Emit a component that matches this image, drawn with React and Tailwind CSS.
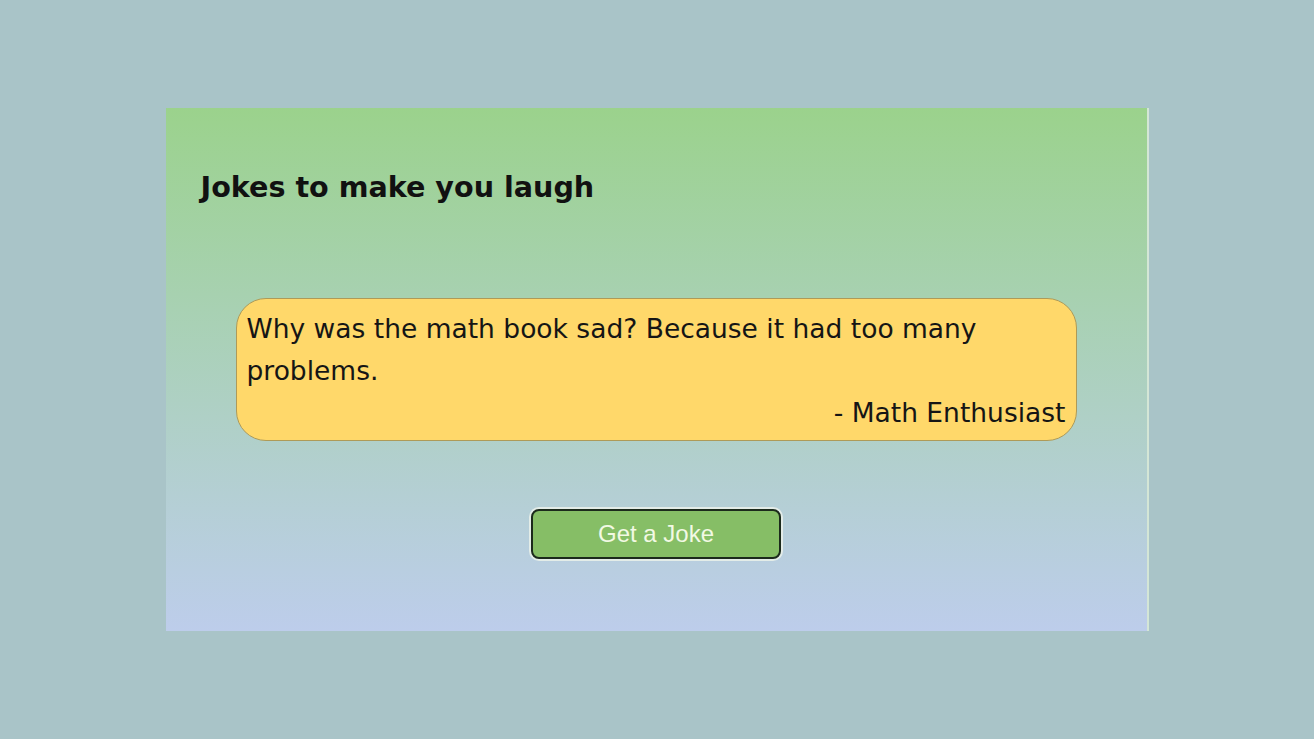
import React from "react";

const comic = { fontFamily: '"Comic Sans MS", "DejaVu Sans", sans-serif' };

const App = () => {
  return (
    <div className="flex h-screen w-full items-center justify-center bg-[#a9c4c8]">
      {/* Card */}
      <div className="flex h-[523px] w-[983px] flex-col border-r-2 border-[#d4e6d6] bg-gradient-to-b from-[#9bd28c] to-[#bdcdeb]">
        <h1
          className="pl-[35px] pt-[57px] text-[28.6px] font-bold leading-[44px] text-[#111]"
          style={comic}
        >
          Jokes to make you laugh
        </h1>

        {/* Joke box */}
        <div
          className="mx-auto mt-[89px] flex h-[143px] w-[841px] shrink-0 flex-col rounded-[30px] border border-[#ae9a58] bg-[#ffd86a] px-[10px] pt-[9px] text-[26.5px] leading-[42px] text-[#151515]"
          style={comic}
        >
          <p className="pr-[80px]">
            Why was the math book sad? Because it had too many problems.
          </p>
          <p className="text-right">- Math Enthusiast</p>
        </div>

        {/* Button */}
        <div className="mt-[68px] flex justify-center">
          <button className="h-[50px] w-[250px] rounded-[8px] border-2 border-[#1c2a1c] bg-[#86be66] text-[24px] text-[#f2f9e4] shadow-[0_0_0_2px_#e3ece8] font-['Liberation_Sans',Arial,sans-serif]">
            Get a Joke
          </button>
        </div>
      </div>
    </div>
  );
};

export default App;
